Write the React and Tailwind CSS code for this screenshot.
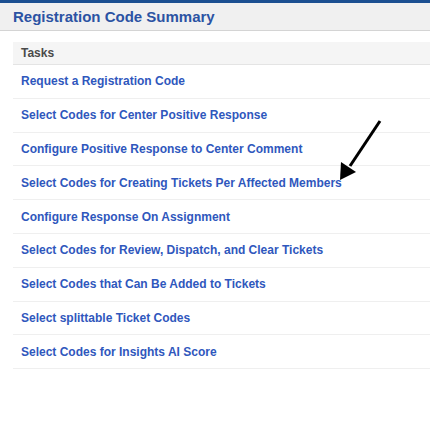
const tasks = [
  "Request a Registration Code",
  "Select Codes for Center Positive Response",
  "Configure Positive Response to Center Comment",
  "Select Codes for Creating Tickets Per Affected Members",
  "Configure Response On Assignment",
  "Select Codes for Review, Dispatch, and Clear Tickets",
  "Select Codes that Can Be Added to Tickets",
  "Select splittable Ticket Codes",
  "Select Codes for Insights AI Score",
];

export default function App() {
  return (
    <div className="relative h-[436px] w-[430px] overflow-hidden bg-white font-['Liberation_Sans',Arial,sans-serif]">
      <div className="h-[3px] bg-[#1b4f91]" />
      <div className="flex h-[28px] items-center border-b border-[#d4d4d4] bg-[#f0f0f0] px-[13px] pt-[2px]">
        <h1 className="text-[15px] font-bold text-[#2b53a3]">Registration Code Summary</h1>
      </div>

      <div className="ml-[13px] mt-[11px]">
        <div className="flex h-[23px] items-center border-b border-[#e4e4e4] bg-[#f5f5f5] px-[8px]">
          <span className="text-[12px] font-bold text-[#4a4a4a]">Tasks</span>
        </div>
        {tasks.map((task) => (
          <div key={task} className="flex h-[33.8px] items-center border-b border-[#efefef] px-[8px]">
            <a className="text-[12px] font-bold text-[#2f57bd]">{task}</a>
          </div>
        ))}
      </div>

      <svg className="absolute left-0 top-0" width="430" height="436">
        <line x1="380" y1="121" x2="350" y2="166" stroke="#000" strokeWidth="3" />
        <polygon points="340,180 341,162 356,172" fill="#000" />
      </svg>
    </div>
  );
}
